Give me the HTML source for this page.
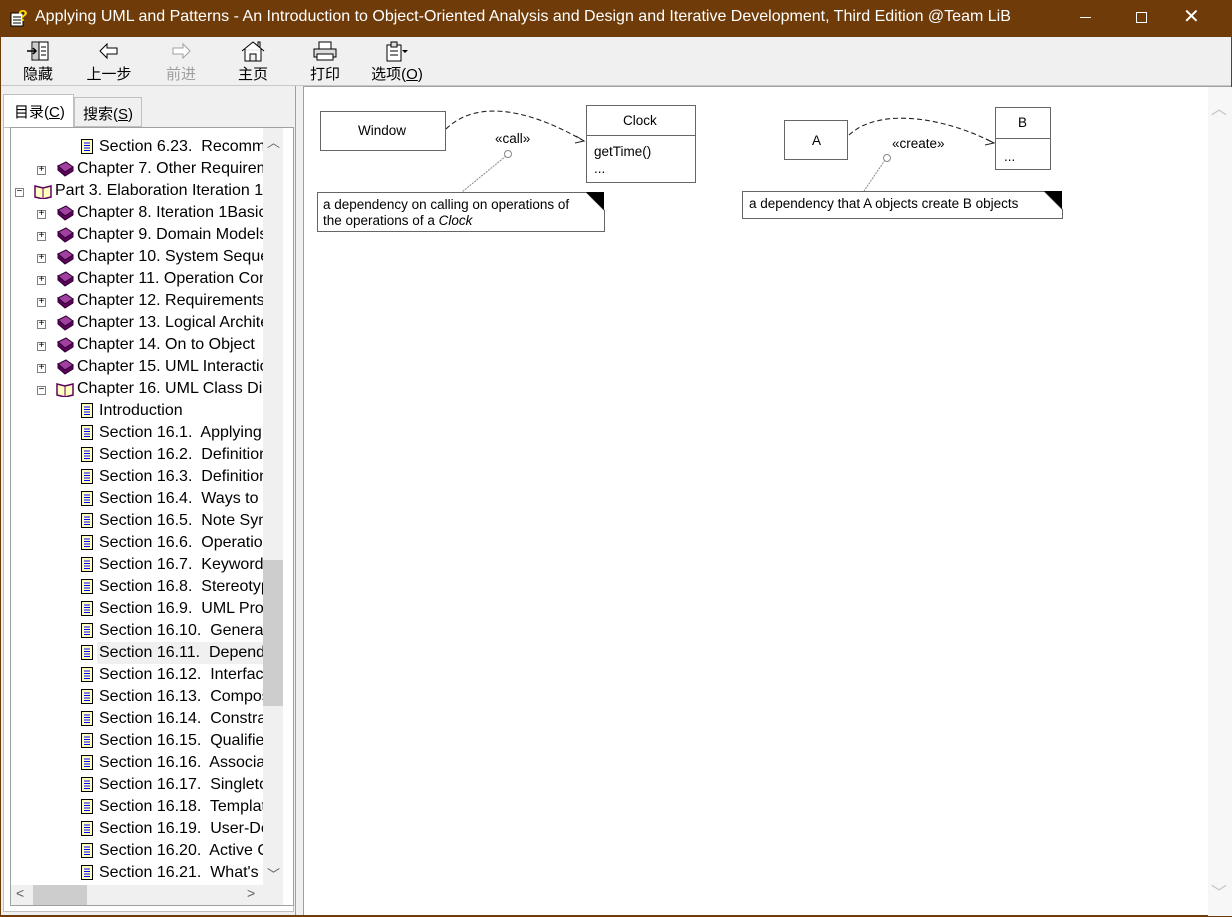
<!DOCTYPE html>
<html><head><meta charset="utf-8"><style>
*{margin:0;padding:0;box-sizing:border-box}
body{width:1232px;height:917px;background:#6f3b08;position:relative;overflow:hidden;font-family:"Liberation Sans","Noto Sans CJK SC",sans-serif}
.abs{position:absolute}
#title{left:0;top:0;width:1232px;height:37px;background:#6f3b08;color:#fff;font-size:15px}
#tb{left:1px;top:37px;width:1230px;height:49px;background:#f0f0f0}
.tbtn{position:absolute;top:0;width:72px;text-align:center;font-size:15px;color:#000}
.tbtn svg{display:block;margin:3px auto 1px}
#left{left:1px;top:86px;width:294px;height:829px;background:#f0f0f0}
#tree{left:10px;top:127px;width:284px;height:779px;border:1px solid #a0a0a0;background:#fff;overflow:hidden}
#clip{position:absolute;left:0;top:0;width:252px;height:757px;overflow:hidden}
.row{position:absolute;height:22px;line-height:22px;font-size:16px;color:#000;white-space:pre}
#right{left:303px;top:86px;width:928px;height:829px;background:#fff;border-left:1px solid #a0a0a0;border-top:1px solid #a0a0a0}
</style></head><body>
<div id="title" class="abs">
<svg class="abs" style="left:9px;top:8px" width="20" height="20"><rect x="2" y="5" width="12" height="13" fill="#fff" stroke="#000"/><line x1="4" y1="9" x2="12" y2="9" stroke="#000"/><line x1="4" y1="12" x2="12" y2="12" stroke="#000"/><line x1="4" y1="15" x2="12" y2="15" stroke="#000"/><text x="9" y="13" font-size="16" font-weight="bold" fill="#ffd800" font-family="Liberation Sans">?</text></svg>
<div class="abs" style="left:35px;top:8px;font-size:16px">Applying UML and Patterns - An Introduction to Object-Oriented Analysis and Design and Iterative Development, Third Edition @Team LiB</div>
<div class="abs" style="left:1080px;top:17px;width:11px;height:1px;background:#fff"></div>
<div class="abs" style="left:1136px;top:12px;width:11px;height:11px;border:1px solid #fff"></div>
<div class="abs" style="left:1183px;top:4px;font-size:20px">✕</div>
</div>
<div id="tb" class="abs">
<div class="tbtn" style="left:1px"><svg width="24" height="22"><rect x="6" y="2" width="16" height="18" fill="#fff" stroke="#000"/><rect x="7" y="3" width="6" height="16" fill="#ccc"/><line x1="13" y1="2" x2="13" y2="20" stroke="#000"/><path d="M1 11h9M7 8l3 3-3 3" stroke="#000" fill="none" stroke-width="1.5"/><line x1="15" y1="7" x2="20" y2="7" stroke="#000"/><line x1="15" y1="11" x2="20" y2="11" stroke="#000"/><line x1="15" y1="15" x2="20" y2="15" stroke="#000"/></svg>隐藏</div>
<div class="tbtn" style="left:72px"><svg width="24" height="22"><path d="M3 11l7-7v4h10v6H10v4z" fill="#fff" stroke="#000"/></svg>上一步</div>
<div class="tbtn" style="left:144px;color:#a0a0a0"><svg width="24" height="22"><path d="M21 11l-7-7v4H4v6h10v4z" fill="#fff" stroke="#a0a0a0"/></svg>前进</div>
<div class="tbtn" style="left:216px"><svg width="26" height="22"><path d="M2 11l11-9 11 9M5 9v12h16V9M10 21v-7h6v7M18 6V2h2v6" fill="#fff" stroke="#000"/></svg>主页</div>
<div class="tbtn" style="left:288px"><svg width="26" height="22"><rect x="7" y="2" width="12" height="7" fill="#fff" stroke="#000"/><rect x="2" y="9" width="22" height="8" fill="#ddd" stroke="#000"/><rect x="5" y="14" width="16" height="6" fill="#fff" stroke="#000"/></svg>打印</div>
<div class="tbtn" style="left:360px"><svg width="26" height="22"><rect x="3" y="5" width="14" height="16" fill="#fff" stroke="#000"/><rect x="7" y="2" width="6" height="5" fill="#ddd" stroke="#000"/><line x1="6" y1="11" x2="14" y2="11" stroke="#000"/><line x1="6" y1="15" x2="14" y2="15" stroke="#000"/><path d="M18 10h6l-3 3z" fill="#000"/></svg>选项(<u>O</u>)</div>
</div>
<div class="abs" style="left:1px;top:85px;width:1230px;height:1px;background:#c8c8c8"></div>
<div id="left" class="abs"></div>
<div class="abs" style="left:3px;top:94px;width:71px;height:34px;background:#fff;border:1px solid #c0c0c0;border-bottom:none;font-size:15px;padding:6px 0 0 10px">目录(<u>C</u>)</div>
<div class="abs" style="left:74px;top:97px;width:68px;height:30px;background:#f0f0f0;border:1px solid #c0c0c0;font-size:15px;padding:5px 0 0 8px">搜索(<u>S</u>)</div>
<div class="abs" style="left:3px;top:127px;width:291px;height:785px;border:1px solid #c0c0c0;background:#fff"></div>
<div id="tree" class="abs">
<div id="clip"><div class="abs" style="left:86px;top:514px;width:170px;height:22px;background:#f0f0f0"></div><div id="rows"></div></div>
<div class="abs" style="left:252px;top:0;width:20px;height:757px;background:#f0f0f0"></div>
<div class="abs" style="left:252px;top:432px;width:20px;height:146px;background:#cdcdcd"></div>
<div class="abs" style="left:256px;top:4px;font-size:13px;color:#606060">︿</div>
<div class="abs" style="left:256px;top:736px;font-size:13px;color:#606060">﹀</div>
<div class="abs" style="left:0;top:757px;width:272px;height:20px;background:#f0f0f0"></div>
<div class="abs" style="left:22px;top:757px;width:54px;height:20px;background:#cdcdcd"></div>
<div class="abs" style="left:5px;top:757px;font-size:14px;color:#606060">&lt;</div>
<div class="abs" style="left:236px;top:757px;font-size:14px;color:#606060">&gt;</div>
</div>
<div class="abs" style="left:295px;top:86px;width:8px;height:829px;background:#f0f0f0;border-left:1px solid #a0a0a0"></div>
<div id="right" class="abs">
<div class="abs" style="left:904px;top:0;width:24px;height:829px;background:#f7f7f7"></div>
<div class="abs" style="left:907px;top:8px;font-size:16px;color:#c0c0c0">︿</div>
<div class="abs" style="left:907px;top:792px;font-size:16px;color:#c0c0c0">﹀</div>
<svg class="abs" style="left:0;top:0" width="900" height="160" font-family="Liberation Sans" font-size="13.5">
<g stroke="#666" fill="#fff">
<rect x="16.5" y="24.5" width="125" height="39"/>
<rect x="282.5" y="18.5" width="109" height="77"/><line x1="282" y1="48.5" x2="392" y2="48.5"/>
<path d="M13.5 105.5h269l18 18v21h-287z"/>
<rect x="480.5" y="33.5" width="63" height="39"/>
<rect x="691.5" y="20.5" width="55" height="62"/><line x1="691" y1="51.5" x2="747" y2="51.5"/>
<path d="M438.5 104.5h302l18 18v9h-320z"/>
</g>
<path d="M282 105h18v18z" fill="#000"/><path d="M740 104h18v18z" fill="#000"/>
<g stroke="#222" fill="none" stroke-dasharray="5,3" stroke-width="1.1">
<path d="M142 42C175 10 230 25 280 54"/>
<path d="M545 48C575 20 640 30 690 56"/>
</g>
<path d="M272 49l8 5-9 2M682 52l8 4-9 2" stroke="#222" fill="none"/>
<g stroke="#888" fill="none"><path d="M202 69L158 105M581 73L560 104" stroke-dasharray="2,1"/><circle cx="204" cy="67" r="3.5" fill="#fff"/><circle cx="583" cy="71" r="3.5" fill="#fff"/></g>
<g fill="#000">
<text x="54" y="48">Window</text><text x="319" y="38">Clock</text><text x="290" y="69">getTime()</text><text x="290" y="86">...</text>
<text x="191" y="56">«call»</text>
<text x="19" y="122">a dependency on calling on operations of</text><text x="19" y="138">the operations of a <tspan font-style="italic">Clock</tspan></text>
<text x="508" y="58">A</text><text x="714" y="40">B</text><text x="700" y="74">...</text>
<text x="588" y="61">«create»</text>
<text x="445" y="121">a dependency that A objects create B objects</text>
</g>
</svg>
</div>
<script>
var items=[
[2,"Section 6.23.  Recommendations"],[1,"Chapter 7. Other Requirements"],[0,"Part 3. Elaboration Iteration 1"],
[1,"Chapter 8. Iteration 1Basics"],[1,"Chapter 9. Domain Models"],[1,"Chapter 10. System Sequence"],[1,"Chapter 11. Operation Contracts"],[1,"Chapter 12. Requirements"],[1,"Chapter 13. Logical Architecture"],[1,"Chapter 14. On to Object"],[1,"Chapter 15. UML Interaction"],[3,"Chapter 16. UML Class Diagrams"],
[2,"Introduction"],[2,"Section 16.1.  Applying"],[2,"Section 16.2.  Definition"],[2,"Section 16.3.  Definition"],[2,"Section 16.4.  Ways to"],[2,"Section 16.5.  Note Symbols"],[2,"Section 16.6.  Operations"],[2,"Section 16.7.  Keywords"],[2,"Section 16.8.  Stereotypes"],[2,"Section 16.9.  UML Properties"],[2,"Section 16.10.  Generalization"],[2,"Section 16.11.  Dependency"],[2,"Section 16.12.  Interfaces"],[2,"Section 16.13.  Composition"],[2,"Section 16.14.  Constraints"],[2,"Section 16.15.  Qualified"],[2,"Section 16.16.  Association"],[2,"Section 16.17.  Singleton"],[2,"Section 16.18.  Template"],[2,"Section 16.19.  User-Defined"],[2,"Section 16.20.  Active Class"],[2,"Section 16.21.  What's"]];
var h="";
var doc='<svg width="13" height="16" style="position:absolute;left:0;top:3px"><rect x="0.5" y="0.5" width="11" height="14" fill="#ffffc0" stroke="#000"/><g stroke="#00f"><line x1="3" y1="4" x2="9" y2="4"/><line x1="3" y1="6.5" x2="9" y2="6.5"/><line x1="3" y1="9" x2="9" y2="9"/><line x1="3" y1="11.5" x2="9" y2="11.5"/></g></svg>';
var book='<svg width="18" height="16" style="position:absolute;left:0;top:3px"><path d="M2 5l8-4 7 5-8 5z" fill="#a040a0" stroke="#300030"/><path d="M2 5v4l7 6 8-5V6l-8 5z" fill="#600060" stroke="#300030"/></svg>';
var open='<svg width="18" height="16" style="position:absolute;left:0;top:3px"><path d="M1 3l8 2 8-2v11l-8 2-8-2z" fill="#ffffc0" stroke="#600060" stroke-width="1.5"/><line x1="9" y1="5" x2="9" y2="16" stroke="#600060"/></svg>';
function box(s){return '<div style="position:absolute;left:0;top:6px;width:9px;height:9px;border:1px solid #808080;background:#fff;font-size:10px;line-height:7px;text-align:center;font-family:Liberation Mono">'+s+'</div>';}
items.forEach(function(it,i){var y=8+i*22;var t=it[0],s=it[1];
if(t==2){h+='<div class="row" style="left:70px;top:'+y+'px"><span style="position:absolute;left:0;top:0">'+doc+'</span><span style="margin-left:18px">'+s+'</span></div>';}
else if(t==1||t==3){h+='<div class="row" style="left:26px;top:'+y+'px"><span style="position:relative">'+box(t==1?'+':'−')+'</span><span style="position:absolute;left:19px;top:0">'+(t==1?book:open)+'</span><span style="margin-left:40px">'+s+'</span></div>';}
else{h+='<div class="row" style="left:4px;top:'+y+'px"><span style="position:relative">'+box('−')+'</span><span style="position:absolute;left:19px;top:0">'+open+'</span><span style="margin-left:40px">'+s+'</span></div>';}
});
document.getElementById('rows').innerHTML=h;
</script>
</body></html>
